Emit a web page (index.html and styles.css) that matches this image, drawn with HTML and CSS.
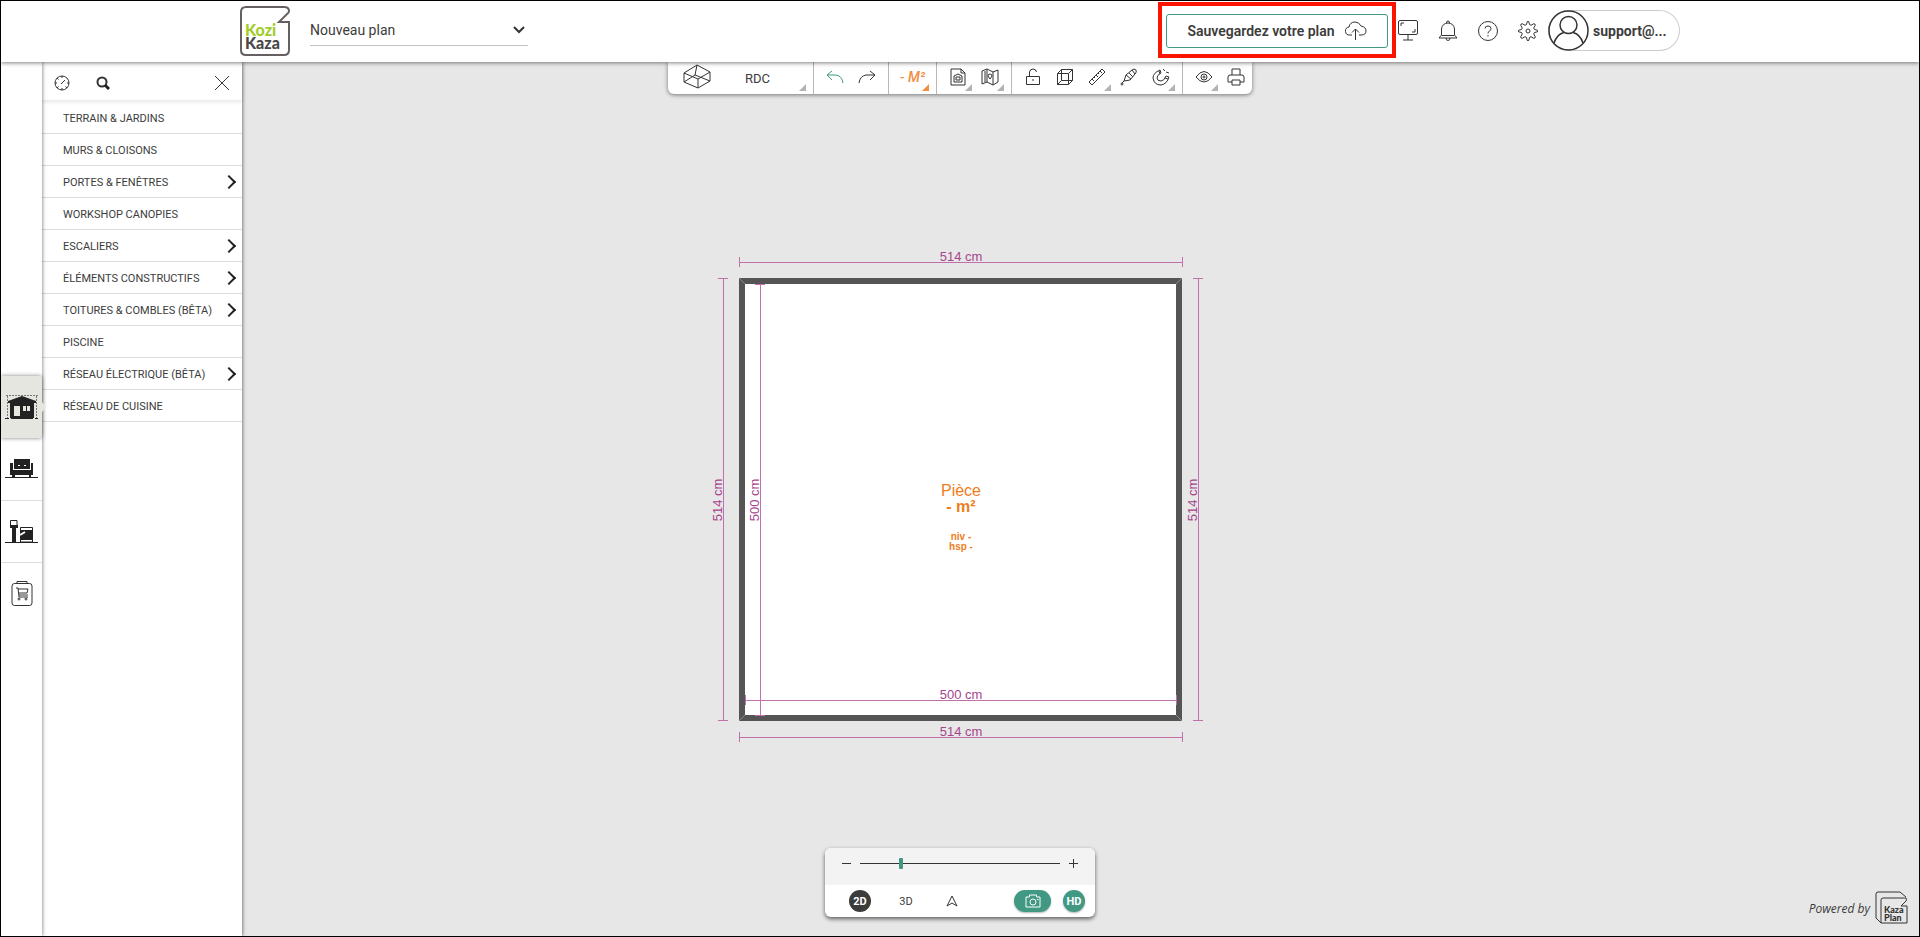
FILE: index.html
```html
<!DOCTYPE html>
<html lang="fr">
<head>
    <meta charset="UTF-8">
    <meta name="viewport" content="width=device-width, initial-scale=1.0">
    <title>KoziKaza - Nouveau plan</title>
    <link rel="stylesheet" href="styles.css">
</head>
<body>
    <header class="header">
        <div class="header-inner">
            <a href="#" class="logo" aria-label="KoziKaza">
                <svg width="50" height="50" viewBox="0 0 50 50">
                    <path d="M5 1H44Q49 1 49 5Q49 7 47 8L39 16H49V44Q49 49 44 49H6Q1 49 1 44V6Q1 1 6 1Z" fill="#fff" stroke="#655f62" stroke-width="2"/>
                    <text x="5" y="30" class="logo-kozi">Kozi</text>
                    <text x="5" y="43" class="logo-kaza">Kaza</text>
                </svg>
            </a>
            <div class="plan-select">
                <select aria-label="Plan">
                    <option>Nouveau plan</option>
                </select>
                <svg width="12" height="8" viewBox="0 0 12 8"><path d="M1 1L6 6L11 1" class="bold-line"/></svg>
            </div>
            <div class="save-box">
                <button class="save-btn">
                    Sauvegardez votre plan
                    <svg width="22" height="20" viewBox="0 0 22 20"><path d="M7 14H5A4 4 0 0 1 4 6Q5 1 10 1Q14 1 16 5Q21 6 21 10Q21 14 16 14H14M10.500 19V8M7 11.500L10.500 8L14 11.500"/></svg>
                </button>
            </div>
            <button class="icon-btn" aria-label="Présentation">
                <svg width="20" height="21" viewBox="0 0 20 21"><rect x=".5" y=".5" width="19" height="14" rx="1.500"/><path d="M10 14.500V20M5 20H15M3 6V3H6M17 9V12H14"/></svg>
            </button>
            <button class="icon-btn" aria-label="Notifications">
                <svg width="20" height="22" viewBox="0 0 20 22"><path d="M3.500 15V9Q4 3.500 10 3Q16 3.500 16.500 9V15L19 18H1L3.500 15ZM4 15.500H16M8.500 3Q8.500 1 10 1Q11.500 1 11.500 3M8 18Q8 20.500 10 20.500Q12 20.500 12 18"/></svg>
            </button>
            <button class="icon-btn" aria-label="Aide">
                <svg width="22" height="22" viewBox="0 0 22 22"><circle cx="11" cy="11" r="9.500"/><path d="M8 8.500Q8 6 11 6Q14 6 14 8.500Q14 10 12.500 11Q11 12 11 13.500M11 15V16.500"/></svg>
            </button>
            <button class="icon-btn" aria-label="Paramètres">
                <svg width="22" height="22" viewBox="0 0 22 22"><circle cx="11" cy="11" r="2"/><path d="M9.500 4.500Q10 1 11 1Q12 1 12.500 4.500L14 5.300Q17 3 18 4Q19 5 16.700 8L17.500 9.500Q21 10 21 11Q21 12 17.500 12.500L16.700 14Q19 17 18 18Q17 19 14 16.700L12.500 17.500Q12 21 11 21Q10 21 9.500 17.500L8 16.700Q5 19 4 18Q3 17 5.300 14L4.500 12.500Q1 12 1 11Q1 10 4.500 9.500L5.300 8Q3 5 4 4Q5 3 8 5.300Z"/></svg>
            </button>
            <button class="user-btn">
                <svg width="41" height="41" viewBox="0 0 41 41"><circle cx="20.500" cy="20.500" r="19.500" class="user-line"/><circle cx="20.500" cy="15" r="8.500" class="user-line"/><path d="M6 33Q9 24 16 22.500M25 22.500Q32 24 35 33" class="user-line"/></svg>
                support@...
            </button>
        </div>
    </header>

    <main class="workspace">
        <div class="stage">
            <div class="toolbar">
                <div class="group">
                    <button class="tool tool-wide" aria-label="Vue"><svg width="28" height="26" viewBox="0 0 28 26"><path d="M1 9L14 1L27 8V17L15 24L1 18ZM1 9L15 15L27 8M15 15V24M1 18L12 11L27 17M12 11L14 1"/></svg></button>
                    <div class="floor has-menu">
                        <select aria-label="Étage">
                            <option>RDC</option>
                        </select>
                    </div>
                </div>
                <div class="group">
                    <button class="tool tool-green" aria-label="Annuler"><svg width="18" height="14" viewBox="0 0 18 14"><path d="M6 1L1 5L6 10M1 5H10Q16 6 17 13"/></svg></button>
                    <button class="tool" aria-label="Rétablir"><svg width="18" height="14" viewBox="0 0 18 14"><path d="M12 1L17 5L12 10M17 5H8Q2 6 1 13"/></svg></button>
                </div>
                <div class="group">
                    <button class="tool tool-area has-menu">- M²</button>
                </div>
                <div class="group">
                    <button class="tool has-menu" aria-label="Importer"><svg width="16" height="18" viewBox="0 0 16 18"><path d="M1 1H11L15 5V17H1ZM11 1V5H15M4 14V8L8 6L12 8V14ZM6 9H10V12H6Z"/></svg></button>
                    <button class="tool has-menu" aria-label="Carte"><svg width="18" height="18" viewBox="0 0 18 18"><path d="M1 3L6 1L12 4L17 2V14L12 17L6 14L1 16ZM6 1V14M12 4V17M4 3V14M9 11L7 8Q7 6 9 6Q11 6 11 8Z"/></svg></button>
                </div>
                <div class="group">
                    <button class="tool" aria-label="Verrouiller"><svg width="16" height="18" viewBox="0 0 16 18"><path d="M1.500 8.500H14.500V16.500H1.500ZM4.500 8V4Q5 1 8 1Q11 1 11.500 4M8 11V13"/></svg></button>
                    <button class="tool" aria-label="Volume"><svg width="18" height="18" viewBox="0 0 18 18"><path d="M1.500 5.500H12.500V16.500H1.500ZM5.500 1.500H16.500V12.500H5.500ZM1.500 5.500L5.500 1.500M12.500 5.500L16.500 1.500M12.500 16.500L16.500 12.500M1.500 16.500L5.500 12.500"/></svg></button>
                    <button class="tool has-menu" aria-label="Mesurer"><svg width="18" height="18" viewBox="0 0 18 18"><path d="M1 14L14 1L17 4L4 17ZM4 11L6 13M6 9L7 10M8 7L10 9M10 5L11 6M12 3L14 5"/></svg></button>
                    <button class="tool" aria-label="Pipette"><svg width="18" height="18" viewBox="0 0 18 18"><path d="M4 13L6 7L12 2Q14 0 16 2Q17 4 15 6L10 12ZM6 7L11 11M9 5L13 9M12 2L15 6M4 13L2 15"/><circle cx="2" cy="16" r="1"/></svg></button>
                    <button class="tool has-menu" aria-label="Aimant"><svg width="18" height="18" viewBox="0 0 18 18"><path d="M8 2Q1 5 1 10Q2 17 9 17Q15 16 17 9L14 8Q12 13 9 13Q5 13 5 10Q5 7 9 5ZM7 3L8 6M16 11L13 10M11 1L13 3M14 4L17 5"/></svg></button>
                </div>
                <div class="group">
                    <button class="tool has-menu" aria-label="Affichage"><svg width="18" height="14" viewBox="0 0 18 14"><path d="M1 7Q9-4 17 7Q9 17 1 7Z"/><circle cx="9" cy="7" r="3"/><circle cx="9" cy="7" r="1"/></svg></button>
                    <button class="tool" aria-label="Imprimer"><svg width="18" height="18" viewBox="0 0 18 18"><path d="M5 7V1H13V7M5 14H1V9Q1 7 3 7H15Q17 7 17 9V14H13M5 12H13V17H5Z"/></svg></button>
                </div>
            </div>

            <!-- Floor plan -->
            <svg class="plan" width="500" height="500" viewBox="0 0 500 500">
                <rect x="32" y="36" width="437" height="437" class="wall"/>
                <path d="M29 33L35 39M472 33L466 39M29 476L35 470M472 476L466 470" class="wall-joint"/>
                <path d="M29 17H472M29 12V22M472 12V22" class="dim"/>
                <path d="M29 492H472M29 487V497M472 487V497" class="dim"/>
                <path d="M13 33V475M8 33H18M8 475H18" class="dim"/>
                <path d="M488 33V475M483 33H493M483 475H493" class="dim"/>
                <path d="M35 455H466M35 450V460M466 450V460" class="dim"/>
                <path d="M50 39V470M45 39H55M45 470H55" class="dim"/>
                <text x="251" y="16" class="dim-text">514 cm</text>
                <text x="251" y="491" class="dim-text">514 cm</text>
                <text x="251" y="454" class="dim-text">500 cm</text>
                <text transform="translate(12 255) rotate(-90)" class="dim-text">514 cm</text>
                <text transform="translate(49 255) rotate(-90)" class="dim-text">500 cm</text>
                <text transform="translate(487 255) rotate(-90)" class="dim-text">514 cm</text>
                <text x="251" y="251" class="room-name">Pièce</text>
                <text x="251" y="267" class="room-area">- m²</text>
                <text x="251" y="295" class="room-info">niv -</text>
                <text x="251" y="305" class="room-info">hsp -</text>
            </svg>

            <div class="view-panel">
                <div class="zoom-row">
                    <button class="zoom-btn" aria-label="Zoom arrière"><svg width="9" height="9" viewBox="0 0 9 9"><path d="M0 4.500H9"/></svg></button>
                    <input type="range" min="0" max="100" value="20" aria-label="Zoom">
                    <button class="zoom-btn" aria-label="Zoom avant"><svg width="9" height="9" viewBox="0 0 9 9"><path d="M0 4.500H9M4.500 0V9"/></svg></button>
                </div>
                <div class="mode-row">
                    <button class="mode active">2D</button>
                    <button class="mode">3D</button>
                    <button class="mode" aria-label="Orientation"><svg width="12" height="12" viewBox="0 0 12 12"><path d="M6 1L11 11L6 8L1 11Z"/></svg></button>
                    <button class="photo" aria-label="Photo"><svg width="16" height="14" viewBox="0 0 16 14"><path d="M1 3H4.500V1H11.500V3H15V13H1Z"/><circle cx="8" cy="8" r="3"/><path d="M12 5.500H13.500"/></svg></button>
                    <button class="hd">HD</button>
                </div>
            </div>
        </div>

        <nav class="rail" aria-label="Catégories">
            <button class="rail-btn active" aria-label="Construction">
                <svg class="solid" width="34" height="26" viewBox="0 0 34 26"><path d="M1 1.500H33M2.500 2V24M31.500 2V24" class="dotted"/><path d="M3 7L17 2L31 7V9H29V24H5V9H3Z"/><path d="M9 12H15V22H9ZM18 12H25V17H18Z" fill="#e6e6e1"/><path d="M21.500 12V17" stroke="#222"/><path d="M0 24.500H4M6 24.500H28M30 24.500H33" stroke="#222"/></svg>
            </button>
            <button class="rail-btn" aria-label="Mobilier">
                <svg class="solid" width="34" height="20" viewBox="0 0 34 20"><path d="M9 0H25V10H9ZM5 4H8V11H26V4H28V16H26V18H24V16H10V18H7V16H5Z"/><path d="M13 6.500H15M19 6.500H21" stroke="#fff"/><path d="M0 18.500H33" stroke="#222"/></svg>
            </button>
            <button class="rail-btn" aria-label="Cuisine">
                <svg class="solid" width="34" height="24" viewBox="0 0 34 24"><path d="M5.500 .500H12V6H5.500Z" fill="none" stroke="#222"/><path d="M5 5H13V8H11V22H7V8H5ZM15 10H28V20H15Z"/><path d="M15.500 7.500H27.500V22H15.500Z" fill="none" stroke="#222"/><path d="M15 15L20 12" stroke="#fff" stroke-width="2"/><path d="M0 22.500H33" stroke="#222"/></svg>
            </button>
            <button class="rail-btn" aria-label="Liste d'achats">
                <svg width="22" height="26" viewBox="0 0 22 26"><rect x="1" y="2.500" width="20" height="22" rx="2.500"/><path d="M6 2V.500H16V2M5 7H7L8 16H17M7 8H17L16 12H8M8 14H17"/><circle cx="8" cy="18" r="1"/><circle cx="15" cy="18" r="1"/></svg>
            </button>
        </nav>

        <aside class="catalog">
            <div class="catalog-head">
                <button class="head-btn" aria-label="Récents"><svg width="16" height="16" viewBox="0 0 16 16"><circle cx="8" cy="8" r="7"/><path d="M8 1V3M8 13V15M1 8H3M13 8H15M3 3L4.500 4.500M3 13L4.500 11.500M13 13L11.500 11.500M7 9L11 5"/></svg></button>
                <button class="head-btn" aria-label="Rechercher"><svg width="14" height="14" viewBox="0 0 14 14"><circle cx="6" cy="6" r="4.500" class="bold-line"/><path d="M9 9L13 13" class="thick-line"/></svg></button>
                <button class="head-btn close" aria-label="Fermer"><svg width="16" height="16" viewBox="0 0 16 16"><path d="M1 1L15 15M15 1L1 15"/></svg></button>
            </div>
            <ul class="catalog-list">
                <li><a href="#">TERRAIN &amp; JARDINS</a></li>
                <li><a href="#">MURS &amp; CLOISONS</a></li>
                <li><a href="#" class="sub">PORTES &amp; FENÊTRES</a></li>
                <li><a href="#">WORKSHOP CANOPIES</a></li>
                <li><a href="#" class="sub">ESCALIERS</a></li>
                <li><a href="#" class="sub">ÉLÉMENTS CONSTRUCTIFS</a></li>
                <li><a href="#" class="sub">TOITURES &amp; COMBLES (BÊTA)</a></li>
                <li><a href="#">PISCINE</a></li>
                <li><a href="#" class="sub">RÉSEAU ÉLECTRIQUE (BÊTA)</a></li>
                <li><a href="#">RÉSEAU DE CUISINE</a></li>
            </ul>
        </aside>

        <a href="#" class="powered">
            Powered by
            <svg width="33" height="34" viewBox="0 0 33 34"><path d="M6 32L1 27V3Q1 1 3 1H25L31 6M6 32V9Q6 7 8 7H31Q32 9 31 10L26 15H32V32ZM1 27L6 32"/><text x="9" y="22" class="powered-logo">Kaza</text><text x="9" y="30" class="powered-logo">Plan</text></svg>
        </a>
    </main>
</body>
</html>
```
FILE: styles.css
```css
/* Basic styling */
* {
    box-sizing: border-box;
}
body {
    font-family: Roboto, Arial, sans-serif;
    margin: 0;
    height: 100vh;
    display: flex;
    flex-direction: column;
    border: 1px solid #000;
    background-color: #e7e7e7;
    color: #3c3c3b;
    overflow: hidden;
}
button,
select {
    font-family: inherit;
    color: inherit;
    background: none;
    border: none;
    padding: 0;
    cursor: pointer;
}
a {
    color: inherit;
    text-decoration: none;
}
svg {
    display: block;
    flex: none;
    fill: none;
    stroke: #333;
    stroke-width: 1;
}
svg text {
    stroke: none;
}
.bold-line {
    stroke-width: 2;
}
.thick-line {
    stroke: #222;
    stroke-width: 3;
}

/* Header */
.header {
    position: relative;
    z-index: 3;
    background-color: #fff;
    box-shadow: 0 1px 4px rgba(0,0,0,0.5);
}
.header-inner {
    display: flex;
    align-items: center;
    max-width: 1440px;
    height: 61px;
    margin: 0 auto;
    padding-bottom: 2px;
}
.logo {
    margin-right: 20px;
}
.logo-kozi,
.logo-kaza {
    font-family: Lato, sans-serif;
    font-size: 16px;
    font-weight: 900;
    fill: #a2cd29;
}
.logo-kaza {
    fill: #4b4749;
}
.plan-select {
    display: flex;
    align-items: center;
    width: 218px;
    height: 30px;
    margin-right: auto;
    padding-right: 3px;
    border-bottom: 1px solid #c4c4c4;
}
.plan-select select {
    flex: 1;
    appearance: none;
    font-size: 14px;
}
.save-box {
    position: relative;
}
.save-box::after {
    content: "";
    position: absolute;
    inset: -12px -8px -10px;
    border: 4px solid #fb1400;
    pointer-events: none;
    z-index: 1;
}
.save-btn {
    display: flex;
    align-items: center;
    justify-content: center;
    gap: 10px;
    width: 222px;
    height: 34px;
    border: 1px solid #419984;
    border-radius: 3px;
    font-size: 14px;
    font-weight: 600;
}
.icon-btn {
    display: flex;
    justify-content: center;
    width: 40px;
}
.user-btn {
    display: flex;
    align-items: center;
    gap: 4px;
    width: 132px;
    border-radius: 21px;
    box-shadow: inset 0 0 0 1px #ccc;
    font-size: 14px;
    font-weight: bold;
}
.user-line {
    stroke-width: 1.5;
}

/* Workspace */
.workspace {
    position: relative;
    flex: 1;
    min-height: 0;
    display: grid;
    grid-template-columns: 41px 200px 1fr;
    grid-template-rows: 100%;
}
.stage {
    grid-area: 1 / 1 / 2 / 4;
    display: flex;
    flex-direction: column;
    align-items: center;
    justify-content: space-between;
    padding-bottom: 19px;
}

/* Toolbar */
.toolbar {
    display: flex;
    height: 32px;
    background-color: #fff;
    border-radius: 0 0 6px 6px;
    box-shadow: 0 1px 4px rgba(0,0,0,0.5);
}
.group {
    display: flex;
    padding: 0 5px;
}
.group + .group {
    border-left: 1px solid #b8b8b8;
}
.group:last-child {
    padding-right: 0;
}
.tool {
    display: flex;
    align-items: center;
    justify-content: center;
    width: 32px;
    padding-bottom: 2px;
}
.tool-wide {
    width: 48px;
}
.tool-green svg {
    stroke: #419984;
}
.tool-area {
    width: 37px;
    color: #f18e42;
    font-size: 14px;
    font-style: italic;
    font-weight: 500;
    white-space: nowrap;
}
.has-menu {
    position: relative;
}
.has-menu::after {
    content: "";
    position: absolute;
    right: 2px;
    bottom: 3px;
    border-left: 7px solid transparent;
    border-bottom: 7px solid #b3b3b3;
}
.tool-area::after {
    right: 2px;
    border-bottom-color: #f18e42;
}
.floor {
    display: flex;
    width: 87px;
    padding-right: 14px;
}
.floor select {
    flex: 1;
    appearance: none;
    font-size: 13px;
    text-align-last: center;
}

/* Floor plan */
.plan {
    margin-top: 48px;
}
.wall {
    fill: #fff;
    stroke: #555;
    stroke-width: 6;
}
.wall-joint {
    stroke: #888;
}
.dim {
    stroke: #c071aa;
    shape-rendering: crispEdges;
}
.dim-text {
    font-family: "Liberation Sans", Arial, sans-serif;
    font-size: 13px;
    text-anchor: middle;
    fill: #a5458d;
}
.room-name,
.room-area,
.room-info {
    font-family: "Liberation Sans", Arial, sans-serif;
    font-size: 16px;
    text-anchor: middle;
    fill: #ef7d1c;
}
.room-area {
    font-weight: bold;
}
.room-info {
    font-size: 10px;
    font-weight: bold;
}

/* Zoom and view mode */
.view-panel {
    width: 270px;
    background-color: #fff;
    border-radius: 6px;
    box-shadow: 0 2px 4px rgba(0,0,0,0.6);
    overflow: hidden;
}
.zoom-row {
    display: flex;
    align-items: center;
    justify-content: center;
    gap: 9px;
    height: 37px;
    padding-bottom: 6px;
    background-color: #f3f3f3;
}
.zoom-row input {
    appearance: none;
    width: 200px;
    height: 11px;
    margin: 0;
    background: linear-gradient(#333, #333) center / 100% 1px no-repeat;
}
.zoom-row input::-webkit-slider-thumb {
    appearance: none;
    width: 4px;
    height: 11px;
    border-radius: 1px;
    background-color: #419984;
}
.mode-row {
    display: flex;
    align-items: center;
    height: 32px;
    padding: 0 10px 0 24px;
}
.mode,
.hd {
    display: flex;
    align-items: center;
    justify-content: center;
    width: 22px;
    height: 22px;
    margin-right: 24px;
    border-radius: 50%;
    font-size: 11px;
}
.mode.active {
    background-color: #3c3c3b;
    color: #fff;
    font-weight: bold;
}
.photo {
    display: flex;
    align-items: center;
    justify-content: center;
    width: 37px;
    height: 22px;
    margin: 0 12px 0 auto;
    border-radius: 11px;
    background-color: #419984;
    box-shadow: 0 1px 2px rgba(0,0,0,0.3);
}
.photo svg {
    stroke: #fff;
}
.hd {
    margin-right: 0;
    background-color: #419984;
    color: #fff;
    font-weight: bold;
    box-shadow: 0 1px 2px rgba(0,0,0,0.3);
}

/* Left rail */
.rail {
    grid-area: 1 / 1;
    z-index: 2;
    display: flex;
    flex-direction: column;
    justify-content: center;
    padding-top: 2px;
    background-color: #fff;
    box-shadow: 0 0 4px rgba(0,0,0,0.6);
}
.rail-btn {
    position: relative;
    display: flex;
    align-items: center;
    justify-content: center;
    height: 62px;
}
.rail-btn + .rail-btn + .rail-btn {
    border-top: 1px solid #ddd;
}
.rail-btn.active {
    background-color: #e6e6e1;
    border-radius: 0 3px 3px 0;
    box-shadow: 0 0 4px rgba(0,0,0,0.5);
}
.rail-btn.active::after {
    content: "";
    position: absolute;
    left: 100%;
    border: 5px solid transparent;
    border-left: 4px solid #e6e6e1;
    border-right: none;
}
.solid {
    fill: #222;
    stroke: none;
}
.dotted {
    fill: none;
    stroke: #777;
    stroke-dasharray: 2 1;
}

/* Catalog */
.catalog {
    grid-area: 1 / 2;
    z-index: 1;
    background-color: #fff;
    box-shadow: 0 0 4px rgba(0,0,0,0.7);
}
.catalog-head {
    display: flex;
    align-items: center;
    gap: 26px;
    height: 38px;
    margin-bottom: 2px;
    padding: 3px 12px 0;
    box-shadow: 0 2px 4px rgba(0,0,0,0.1);
}
.close {
    margin-left: auto;
}
.catalog-list {
    margin: 0;
    padding: 0;
    list-style-type: none;
}
.catalog-list a {
    display: flex;
    align-items: center;
    justify-content: space-between;
    height: 32px;
    padding: 2px 8px 0 21px;
    border-bottom: 1px solid #ddd;
    font-size: 11px;
}
.sub::after {
    content: "";
    width: 8px;
    height: 8px;
    margin-bottom: 2px;
    border: solid #222;
    border-width: 2px 2px 0 0;
    transform: rotate(45deg);
}

/* Powered by */
.powered {
    position: absolute;
    right: 11px;
    bottom: 11px;
    display: flex;
    align-items: center;
    gap: 5px;
    font-family: "Open Sans", sans-serif;
    font-size: 12px;
    font-style: italic;
}
.powered-logo {
    font-family: Lato, sans-serif;
    font-size: 9px;
    font-style: normal;
    font-weight: 900;
    fill: #333;
}
```
